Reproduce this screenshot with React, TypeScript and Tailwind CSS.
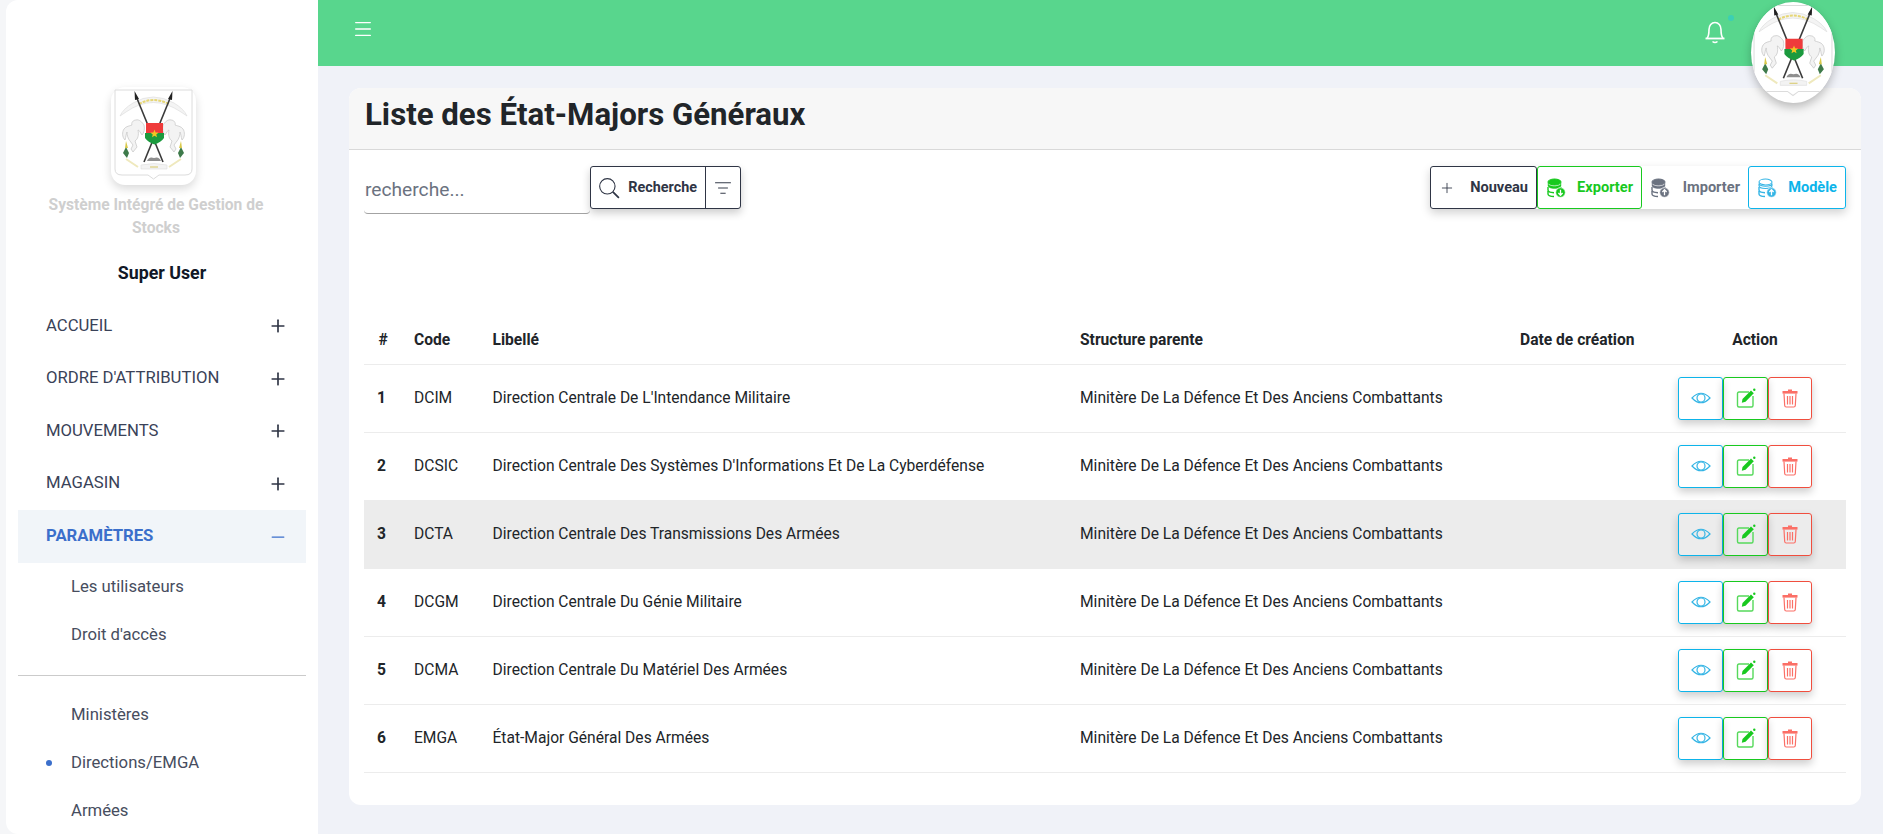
import React from "react";
import { Menu, Plus, Minus, ListFilter } from "lucide-react";

function Emblem({ className }: { className?: string }) {
  return (
    <svg viewBox="0 0 85 98" className={className}>
      <path d="M4 3H81V82Q81 88 74 88H48L42.500 92L37 88H11Q4 88 4 82Z" fill="#fff" stroke="#dcdcdc" strokeWidth="1" />
      <path d="M9 29Q12 22 22 16Q42 4 63 16Q73 22 76 29L70 25Q42 6 15 25Z" fill="#f4f4f4" stroke="#dedede" strokeWidth="0.7" />
      <path d="M28 17Q42 9 58 17" fill="none" stroke="#e6d675" strokeWidth="2" strokeDasharray="3 1" />
      <path d="M25 33C28 32 31 35 33 38C34 42 33 46 31 48C29 45 28 43 27 43C28 48 27 52 24 54L26 60L22 65L20 62L22 58L19 54C17 52 16 48 16 45C15 47 15 50 14 53C11 50 11 45 13 42C15 39 19 39 21 38C20 36 22 33 25 33Z" fill="#f3f3f3" stroke="#c4c4c4" strokeWidth="0.7" />
      <path d="M60 33C57 32 54 35 52 38C51 42 52 46 54 48C56 45 57 43 58 43C57 48 58 52 61 54L59 60L63 65L65 62L63 58L66 54C68 52 69 48 69 45C70 47 70 50 71 53C74 50 74 45 72 42C70 39 66 39 64 38C65 36 63 33 60 33Z" fill="#f3f3f3" stroke="#c4c4c4" strokeWidth="0.7" />
      <path d="M15 60L12 66L16 71L18 66Z" fill="#3e7a4a" />
      <path d="M15 54L14 61H17Z" fill="#d9c94b" />
      <path d="M70 60L73 66L69 71L67 66Z" fill="#3e7a4a" />
      <path d="M70 54L71 61H68Z" fill="#d9c94b" />
      <line x1="25" y1="9" x2="52" y2="75" stroke="#3a3a3a" strokeWidth="1.600" />
      <line x1="60" y1="9" x2="33" y2="75" stroke="#3a3a3a" strokeWidth="1.600" />
      <path d="M23.500 4L28 12L24 13Z" fill="#222" />
      <path d="M61.500 4L57 12L61 13Z" fill="#222" />
      <path d="M35 36H52V46H35Z" fill="#ef3b3b" />
      <path d="M34 46H53V51Q50 55 43.500 57.500Q37 55 34 51Z" fill="#1b9a3e" />
      <path d="M43.500 42.500L44.600 45.400L47.600 45.600L45.300 47.400L46 50.300L43.500 48.700L41 50.300L41.700 47.400L39.400 45.600L42.400 45.400Z" fill="#f3c623" />
      <path d="M36 74Q38 69 43 71Q48 69 50 74Z" fill="#8f8f8f" />
      <path d="M30 78Q43 75 56 78V82H30Z" fill="#f3f3f3" stroke="#dedede" strokeWidth="0.6" />
      <path d="M39 80H47" stroke="#d6c765" strokeWidth="1" />
      <path d="M15 72L27 80M70 72L58 80" stroke="#efe9bd" strokeWidth="2" />
    </svg>
  );
}

function Db({ color, down, outline }: { color: string; down?: boolean; outline?: boolean }) {
  const fill = outline ? "none" : color;
  return (
    <svg viewBox="0 0 20 20" className="w-[20px] h-[20px] shrink-0">
      <ellipse cx="8.500" cy="4" rx="6.500" ry="3" fill={fill} stroke={color} strokeWidth="1.100" />
      <path d="M2 7.500C2 9.500 5 10.500 8.500 10.500C12 10.500 15 9.500 15 7.500V5.500C15 7 12 8.200 8.500 8.200C5 8.200 2 7 2 5.500Z" fill={fill} stroke={color} strokeWidth={outline ? 1.100 : 0.4} />
      <path d="M2 9V12C2 13.500 4.500 14.600 8 14.700M15 9V10" fill="none" stroke={color} strokeWidth="1.400" />
      <path d="M2 13V16C2 17.500 4.500 18.400 8 18.500" fill="none" stroke={color} strokeWidth="1.400" />
      <circle cx="14.500" cy="14.500" r="4.800" fill={color} stroke="#fff" strokeWidth="0.700" />
      {down ? (
        <path d="M14.500 11.700V17M12.400 15L14.500 17.200L16.600 15" fill="none" stroke="#fff" strokeWidth="1.300" />
      ) : (
        <path d="M14.500 17.300V12M12.400 14L14.500 11.800L16.600 14" fill="none" stroke="#fff" strokeWidth="1.300" />
      )}
    </svg>
  );
}

function ToolBtn({ cls, text, icon, w }: { cls: string; text: string; icon: React.ReactNode; w: string }) {
  return (
    <button className={`h-[43px] ${w} flex items-center justify-between pl-[8px] pr-[8px] rounded-[3px] bg-white text-[14.6px] font-bold ${cls}`}>
      {icon}
      <span>{text}</span>
    </button>
  );
}

function ActionBtns() {
  return (
    <div className="flex justify-start pl-[14px]">
      <button className="w-[45px] h-[43px] flex items-center justify-center border border-[#0db4ea] rounded-[3px] shadow-[0_4px_8px_rgba(0,0,0,0.2)]">
        <svg viewBox="0 0 20 20" className="w-[20px] h-[20px]" fill="none" stroke="#35b5e5" strokeWidth="1.200">
          <path d="M1 10Q10 0.500 19 10Q10 19.500 1 10Z" />
          <circle cx="10" cy="10" r="4" />
        </svg>
      </button>
      <button className="w-[45px] h-[43px] flex items-center justify-center border border-[#18c91f] rounded-[3px] shadow-[0_4px_8px_rgba(0,0,0,0.2)]">
        <svg viewBox="0 0 20 20" className="w-[20px] h-[20px]">
          <path d="M13 4H3Q1.500 4 1.500 5.500V17.500Q1.500 19 3 19H15.500Q17 19 17 17.500V8" fill="none" stroke="#56d95b" strokeWidth="1.400" />
          <path d="M6.500 11L15 2.500L17.800 5.300L9.500 13.700L5.800 14.700Z" fill="#18c91f" />
          <circle cx="18.300" cy="1.700" r="1.200" fill="#18c91f" />
        </svg>
      </button>
      <button className="w-[44px] h-[43px] flex items-center justify-center border border-[#f04e3e] rounded-[3px] shadow-[0_4px_8px_rgba(0,0,0,0.2)]">
        <svg viewBox="0 0 20 20" className="w-[20px] h-[20px]">
          <path d="M8 1.500H12V3H8Z" fill="#fb6f66" />
          <rect x="2.500" y="3" width="15" height="2.600" fill="#fb6f66" />
          <path d="M4 5.500L4.700 17.500Q4.800 19 6.200 19H13.800Q15.200 19 15.300 17.500L16 5.500M7.500 8V16.500M10 8V16.500M12.500 8V16.500" fill="none" stroke="#fb6f66" strokeWidth="1.200" />
        </svg>
      </button>
    </div>
  );
}

const rows = [
  ["1", "DCIM", "Direction Centrale De L'Intendance Militaire"],
  ["2", "DCSIC", "Direction Centrale Des Systèmes D'Informations Et De La Cyberdéfense"],
  ["3", "DCTA", "Direction Centrale Des Transmissions Des Armées"],
  ["4", "DCGM", "Direction Centrale Du Génie Militaire"],
  ["5", "DCMA", "Direction Centrale Du Matériel Des Armées"],
  ["6", "EMGA", "État-Major Général Des Armées"],
];

function MenuItem({ label }: { label: string }) {
  return (
    <div className="h-[52.500px] flex items-center justify-between pl-[28px] pr-[18px] text-[16.7px] text-[#3a4258]">
      <span className="-translate-y-[1px]">{label}</span>
      <Plus size={20} strokeWidth={2} color="#2f3545" />
    </div>
  );
}

export default function App() {
  return (
    <div className="flex h-[834px] w-[1883px] overflow-hidden bg-[#f0f2f8] font-['Roboto',sans-serif] text-[#212529]">
      <aside className="w-[318px] shrink-0 bg-[#f5f6f8] pl-[6px]">
        <div className="h-full bg-white rounded-l-[12px] px-[12px] flex flex-col overflow-hidden">
          <div className="pt-[87px] flex flex-col items-center">
            <div className="w-[85px] h-[98px] rounded-[14px] bg-white shadow-[0_4px_10px_rgba(0,0,0,0.15)] -translate-x-[9px]">
              <Emblem className="w-full h-full" />
            </div>
            <p className="w-[240px] mt-[9px] text-center text-[15.6px] leading-[23px] font-bold text-[#cfcfcf] -translate-x-[6px]">
              Système Intégré de Gestion de Stocks
            </p>
            <p className="mt-[21px] text-[17.8px] leading-[24px] font-bold text-[#111827]">Super User</p>
          </div>
          <nav className="mt-[15px]">
            <MenuItem label="ACCUEIL" />
            <MenuItem label="ORDRE D'ATTRIBUTION" />
            <MenuItem label="MOUVEMENTS" />
            <MenuItem label="MAGASIN" />
            <div className="h-[53px] flex items-center justify-between pl-[28px] pr-[18px] bg-[#f1f5f9] text-[16.7px] font-bold text-[#3b6fcb]">
              <span className="-translate-y-[1px]">PARAMÈTRES</span>
              <Minus size={20} strokeWidth={1.500} color="#3b6fcb" />
            </div>
            <div className="pl-[53px] text-[16.7px] text-[#474d5e]">
              <div className="h-[48px] flex items-center">Les utilisateurs</div>
              <div className="h-[48px] flex items-center">Droit d'accès</div>
            </div>
            <hr className="mt-[16px] border-t border-[#cbcbcb]" />
            <div className="pt-[15px] pl-[53px] text-[16.7px] text-[#474d5e]">
              <div className="h-[48px] flex items-center">Ministères</div>
              <div className="h-[48px] flex items-center relative">
                <span className="absolute -left-[25px] top-[21px] w-[6px] h-[6px] rounded-full bg-[#3b6fcb]" />
                Directions/EMGA
              </div>
              <div className="h-[48px] flex items-center">Armées</div>
            </div>
          </nav>
        </div>
      </aside>

      <div className="flex-1 min-w-0 flex flex-col relative">
        <header className="h-[66px] shrink-0 bg-[#58d68d] flex items-center justify-between pl-[34px] pr-[156px]">
          <Menu size={22} strokeWidth={1.400} color="#fff" className="-translate-y-[4px]" />
          <div className="relative -translate-y-[2px]">
            <svg viewBox="0 0 24 24" className="w-[24px] h-[26px]" fill="none" stroke="#fff" strokeWidth="1.600">
              <path d="M4 19.500C6 17 6 14 6 10.500C6 6.500 8.500 3.500 12 3.500C15.500 3.500 18 6.500 18 10.500C18 14 18 17 20 19.500" />
              <path d="M2.500 19.500H21.500" strokeWidth="1.800" />
              <path d="M9.500 22.500Q12 24.500 14.500 22.500" />
            </svg>
            <span className="absolute -right-[7px] -top-[3px] w-[6px] h-[6px] rounded-full bg-[#3ccfb4]" />
          </div>
        </header>

        <div className="absolute left-[1433px] top-[2px] w-[84px] h-[101px] rounded-[50%] bg-white overflow-hidden shadow-[0_4px_10px_rgba(0,0,0,0.25)] z-10">
          <Emblem className="w-[86px] h-[100px] -ml-[1px]" />
        </div>

        <main className="flex-1 pl-[31px] pr-[22px] pt-[22px] pb-[29px] min-h-0">
          <section className="h-full bg-white rounded-[12px] overflow-hidden">
            <div className="h-[62px] bg-[#f7f7f7] border-b border-[#d9d9d9] pl-[16px] pt-[8px]">
              <h1 className="text-[31.2px] leading-[38px] font-bold text-[#212529]">Liste des État-Majors Généraux</h1>
            </div>
            <div className="px-[15px]">
              <div className="flex items-start justify-between pt-[16px]">
                <div className="flex items-start">
                  <input
                    placeholder="recherche..."
                    className="w-[226px] h-[48px] pl-[1px] bg-transparent border-b border-[#a3a3a3] rounded-b-[4px] text-[19.2px] outline-none placeholder:text-[#6b7280]"
                  />
                  <div className="flex h-[43px] border border-[#2f3545] rounded-[3px] shadow-[0_4px_8px_rgba(0,0,0,0.2)] bg-white text-[#2f3545]">
                    <button className="w-[115px] flex items-center justify-between pl-[7px] pr-[8px] border-r border-[#2f3545] text-[14.4px] font-bold">
                      <svg viewBox="0 0 20 20" className="w-[22px] h-[22px]" fill="none" stroke="#2f3545">
                        <circle cx="8.500" cy="8.500" r="7" strokeWidth="1" />
                        <path d="M13.500 13.500L19 19" strokeWidth="1.600" />
                      </svg>
                      <span>Recherche</span>
                    </button>
                    <button className="w-[34px] flex items-center justify-center">
                      <ListFilter size={18} strokeWidth={1.300} color="#2f3545" />
                    </button>
                  </div>
                </div>
                <div className="flex shadow-[0_4px_10px_rgba(0,0,0,0.18)] rounded-[3px]">
                  <ToolBtn w="w-[107px]" cls="border border-[#2f3545] text-[#2f3545]" text="Nouveau" icon={<Plus size={16} strokeWidth={1.300} color="#2f3545" />} />
                  <ToolBtn w="w-[105px]" cls="border border-[#18c91f] text-[#18c91f]" text="Exporter" icon={<Db color="#18c91f" down />} />
                  <ToolBtn w="w-[106px]" cls="text-[#6b7280]" text="Importer" icon={<Db color="#6b7280" />} />
                  <ToolBtn w="w-[98px]" cls="border border-[#0db4ea] text-[#0db4ea]" text="Modèle" icon={<Db color="#35b5e5" outline />} />
                </div>
              </div>

              <table className="w-[1482px] mt-[100px] table-fixed border-collapse text-[15.6px]">
                <colgroup>
                  <col className="w-[38px]" />
                  <col className="w-[79px]" />
                  <col className="w-[587px]" />
                  <col className="w-[438px]" />
                  <col className="w-[158px]" />
                  <col className="w-[182px]" />
                </colgroup>
                <thead>
                  <tr className="h-[50px] border-b border-[#ececec] text-left">
                    <th className="text-center font-bold pt-[4px]">#</th>
                    <th className="px-[12px] font-bold pt-[4px]">Code</th>
                    <th className="pl-[11.500px] font-bold pt-[4px]">Libellé</th>
                    <th className="px-[12px] font-bold pt-[4px]">Structure parente</th>
                    <th className="px-[14px] font-bold whitespace-nowrap pt-[4px]">Date de création</th>
                    <th className="text-center font-bold pt-[4px]">Action</th>
                  </tr>
                </thead>
                <tbody>
                  {rows.map((r) => (
                    <tr key={r[0]} className={`h-[68px] border-b border-[#ececec] ${r[0] === "3" ? "bg-[#ececec]" : ""}`}>
                      <td className="pl-[13px] pt-[2px] font-bold">{r[0]}</td>
                      <td className="px-[12px] pt-[2px]">{r[1]}</td>
                      <td className="pl-[11.500px] pt-[2px] whitespace-nowrap">{r[2]}</td>
                      <td className="px-[12px] pt-[2px] whitespace-nowrap">Minitère De La Défence Et Des Anciens Combattants</td>
                      <td />
                      <td><ActionBtns /></td>
                    </tr>
                  ))}
                </tbody>
              </table>
            </div>
          </section>
        </main>
      </div>
    </div>
  );
}
